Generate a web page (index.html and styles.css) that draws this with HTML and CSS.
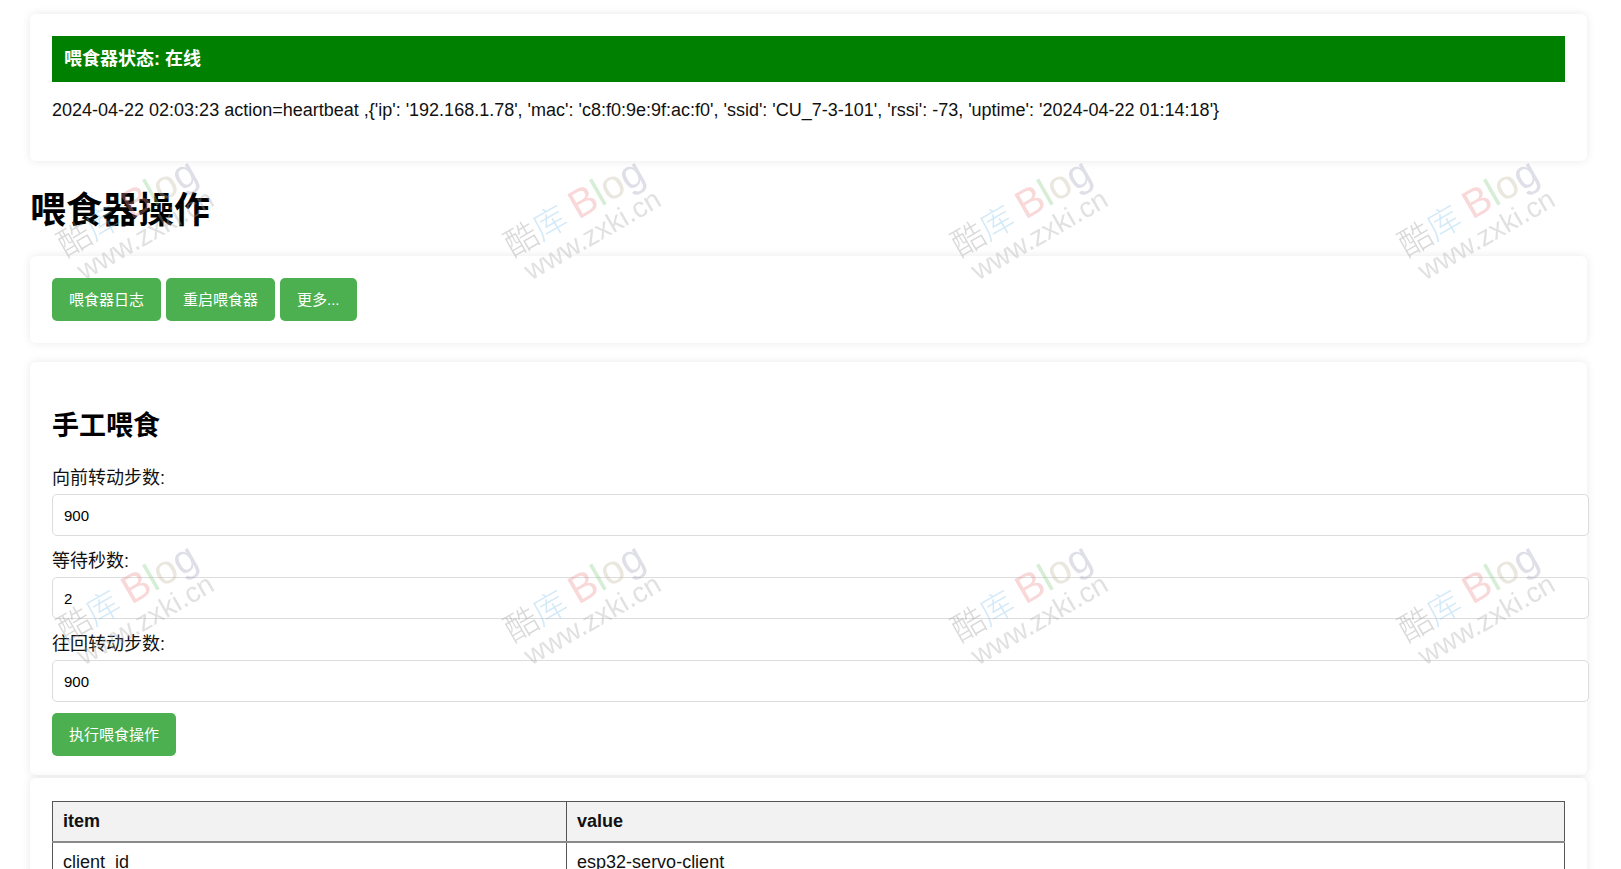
FILE: index.html
```html
<!DOCTYPE html>
<html lang="zh-CN">
<head>
<meta charset="utf-8">
<title>喂食器控制</title>
<link rel="stylesheet" href="styles.css">
</head>
<body>
<div class="page">
  <section class="card status-card">
    <div class="status-bar">喂食器状态: 在线</div>
    <p class="log-line">2024-04-22 02:03:23 action=heartbeat ,{'ip': '192.168.1.78', 'mac': 'c8:f0:9e:9f:ac:f0', 'ssid': 'CU_7-3-101', 'rssi': -73, 'uptime': '2024-04-22 01:14:18'}</p>
  </section>

  <h1 class="page-title">喂食器操作</h1>

  <section class="card actions-card">
    <div class="btn-row">
      <button class="btn">喂食器日志</button>
      <button class="btn">重启喂食器</button>
      <button class="btn">更多...</button>
    </div>
  </section>

  <section class="card form-card">
    <h2 class="section-title">手工喂食</h2>
    <form class="feed-form">
      <label class="field-label" for="fwd">向前转动步数:</label>
      <input class="field-input" id="fwd" type="text" value="900">
      <label class="field-label" for="wait">等待秒数:</label>
      <input class="field-input" id="wait" type="text" value="2">
      <label class="field-label" for="back">往回转动步数:</label>
      <input class="field-input" id="back" type="text" value="900">
      <button class="btn" type="button">执行喂食操作</button>
    </form>
  </section>

  <section class="card table-card">
    <table class="info-table">
      <thead>
        <tr><th class="col-item">item</th><th>value</th></tr>
      </thead>
      <tbody>
        <tr><td>client_id</td><td>esp32-servo-client</td></tr>
        <tr><td>ip</td><td>192.168.1.78</td></tr>
        <tr><td>mac</td><td>c8:f0:9e:9f:ac:f0</td></tr>
        <tr><td>ssid</td><td>CU_7-3-101</td></tr>
        <tr><td>rssi</td><td>-73</td></tr>
        <tr><td>uptime</td><td>2024-04-22 01:14:18</td></tr>
      </tbody>
    </table>
  </section>
</div>

<div class="watermarks" aria-hidden="true">
  <div class="wm wm-a1"><span class="wm-l1"><span class="c-ku">酷</span><span class="c-ku2">库</span> <span class="c-b">B</span><span class="c-l">l</span><span class="c-o">o</span><span class="c-g">g</span></span><span class="wm-l2">www.zxki.cn</span></div>
  <div class="wm wm-a2"><span class="wm-l1"><span class="c-ku">酷</span><span class="c-ku2">库</span> <span class="c-b">B</span><span class="c-l">l</span><span class="c-o">o</span><span class="c-g">g</span></span><span class="wm-l2">www.zxki.cn</span></div>
  <div class="wm wm-a3"><span class="wm-l1"><span class="c-ku">酷</span><span class="c-ku2">库</span> <span class="c-b">B</span><span class="c-l">l</span><span class="c-o">o</span><span class="c-g">g</span></span><span class="wm-l2">www.zxki.cn</span></div>
  <div class="wm wm-a4"><span class="wm-l1"><span class="c-ku">酷</span><span class="c-ku2">库</span> <span class="c-b">B</span><span class="c-l">l</span><span class="c-o">o</span><span class="c-g">g</span></span><span class="wm-l2">www.zxki.cn</span></div>
  <div class="wm wm-b1"><span class="wm-l1"><span class="c-ku">酷</span><span class="c-ku2">库</span> <span class="c-b">B</span><span class="c-l">l</span><span class="c-o">o</span><span class="c-g">g</span></span><span class="wm-l2">www.zxki.cn</span></div>
  <div class="wm wm-b2"><span class="wm-l1"><span class="c-ku">酷</span><span class="c-ku2">库</span> <span class="c-b">B</span><span class="c-l">l</span><span class="c-o">o</span><span class="c-g">g</span></span><span class="wm-l2">www.zxki.cn</span></div>
  <div class="wm wm-b3"><span class="wm-l1"><span class="c-ku">酷</span><span class="c-ku2">库</span> <span class="c-b">B</span><span class="c-l">l</span><span class="c-o">o</span><span class="c-g">g</span></span><span class="wm-l2">www.zxki.cn</span></div>
  <div class="wm wm-b4"><span class="wm-l1"><span class="c-ku">酷</span><span class="c-ku2">库</span> <span class="c-b">B</span><span class="c-l">l</span><span class="c-o">o</span><span class="c-g">g</span></span><span class="wm-l2">www.zxki.cn</span></div>
</div>
</body>
</html>
```

FILE: styles.css
```css
html, body {
  margin: 0;
  padding: 0;
  background: #ffffff;
}

body {
  font-family: "Liberation Sans", "Noto Sans CJK SC", sans-serif;
  font-size: 18px;
  color: #111;
}

.page {
  padding: 14px 34px 20px 30px;
}

.card {
  background: #fff;
  border-radius: 6px;
  box-shadow: 0 0 10px rgba(0, 0, 0, 0.09);
  padding: 22px;
}

/* status card */
.status-bar {
  background: #008000;
  color: #fff;
  font-weight: bold;
  font-size: 18px;
  line-height: 24px;
  padding: 11px 12px;
}

.log-line {
  margin: 18px 0;
  line-height: 21px;
}

.page-title {
  font-size: 36px;
  line-height: 47px;
  font-weight: bold;
  margin: 26px 0 22px;
  color: #000;
}

/* buttons */
.actions-card {
  margin-bottom: 19px;
}

.btn-row {
  display: flex;
  gap: 5px;
}

.btn {
  font-family: "Liberation Sans", "Noto Sans CJK SC", sans-serif;
  font-size: 15px;
  line-height: 21px;
  color: #fff;
  background: #4caf50;
  border: none;
  border-radius: 5px;
  padding: 11px 17px;
  cursor: pointer;
}

/* form */
.form-card {
  padding-bottom: 19px;
  margin-bottom: 3px;
}

.section-title {
  font-size: 27px;
  line-height: 32px;
  font-weight: bold;
  margin: 26px 0 22px;
  color: #000;
}

.feed-form {
  margin: 0;
}

.field-label {
  display: block;
  line-height: 28px;
  margin-bottom: 2px;
}

.field-input {
  display: block;
  width: 100%;
  box-sizing: content-box;
  height: 16px;
  padding: 12px 11px;
  margin: 0 0 11px 0;
  border: 1px solid #dcdcdc;
  border-radius: 5px;
  font-family: "Liberation Sans", "Noto Sans CJK SC", sans-serif;
  font-size: 15px;
  color: #000;
  background: #fff;
}

/* table */
.table-card {
  padding-top: 23px;
}

.info-table {
  width: 100%;
  border-collapse: collapse;
  border: 1px solid #333;
}

.info-table th,
.info-table td {
  border: 1px solid #555;
  padding: 9px 10px;
  line-height: 21px;
  text-align: left;
  font-size: 18px;
}

.info-table th {
  background: #f2f2f2;
  font-weight: bold;
  border-bottom: 2px solid #8a8a8a;
}

.col-item {
  width: 34%;
}

/* watermark overlay */
.watermarks {
  position: fixed;
  inset: 0;
  pointer-events: none;
  z-index: 10;
  overflow: hidden;
}

.wm {
  position: absolute;
  transform: rotate(-30deg);
  transform-origin: 0 0;
  white-space: nowrap;
  opacity: 0.34;
}

.wm-l1 {
  display: block;
  font-family: "Noto Sans CJK SC", "Liberation Sans", sans-serif;
  font-weight: 300;
  font-size: 33px;
  line-height: 36px;
}

.wm-l2 {
  display: block;
  font-family: "Liberation Sans", sans-serif;
  font-size: 28px;
  line-height: 32px;
  color: #a8a8a8;
  margin-left: 4px;
}

.c-ku { color: #909090; }
.c-ku2 { color: #80c0ea; margin-right: 2px; }
.c-b, .c-l, .c-o, .c-g { font-family: "Liberation Sans", sans-serif; font-size: 40px; }
.c-b { color: #ea8c8c; }
.c-l { color: #84cc84; }
.c-o { color: #c0b8a0; }
.c-g { color: #a0a0bc; }

.wm-a1 { left: 50px; top: 230px; }
.wm-a2 { left: 497px; top: 230px; }
.wm-a3 { left: 944px; top: 230px; }
.wm-a4 { left: 1391px; top: 230px; }
.wm-b1 { left: 50px; top: 615px; }
.wm-b2 { left: 497px; top: 615px; }
.wm-b3 { left: 944px; top: 615px; }
.wm-b4 { left: 1391px; top: 615px; }
```
